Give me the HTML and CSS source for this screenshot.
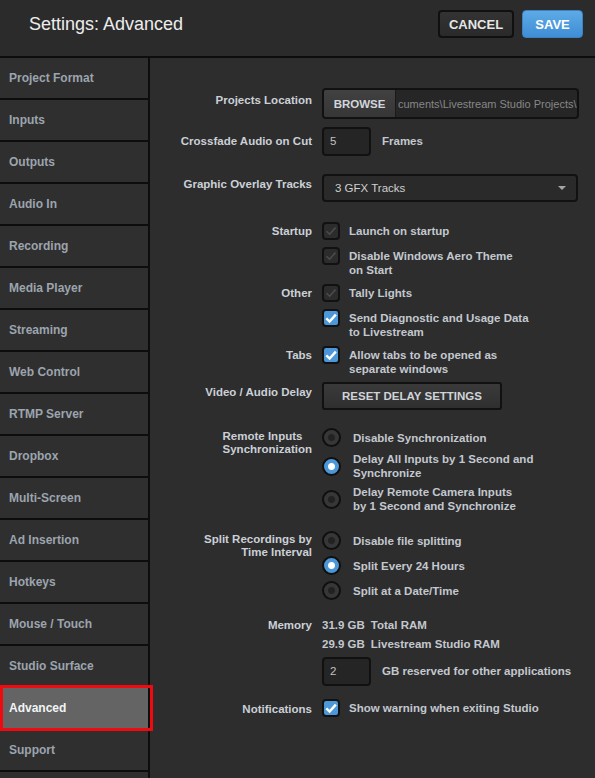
FILE: index.html
```html
<!DOCTYPE html>
<html>
<head>
<meta charset="utf-8">
<link rel="stylesheet" href="styles.css">
</head>
<body>
<div class="app">
  <header class="topbar">
    <h1 class="title">Settings: Advanced</h1>
    <div class="actions">
      <button class="btn btn-cancel">CANCEL</button>
      <button class="btn btn-save">SAVE</button>
    </div>
  </header>
  <div class="body">
    <nav class="sidebar">
      <div class="nav-item">Project Format</div>
      <div class="nav-item">Inputs</div>
      <div class="nav-item">Outputs</div>
      <div class="nav-item">Audio In</div>
      <div class="nav-item">Recording</div>
      <div class="nav-item">Media Player</div>
      <div class="nav-item">Streaming</div>
      <div class="nav-item">Web Control</div>
      <div class="nav-item">RTMP Server</div>
      <div class="nav-item">Dropbox</div>
      <div class="nav-item">Multi-Screen</div>
      <div class="nav-item">Ad Insertion</div>
      <div class="nav-item">Hotkeys</div>
      <div class="nav-item">Mouse / Touch</div>
      <div class="nav-item">Studio Surface</div>
      <div class="nav-item active">Advanced</div>
      <div class="nav-item">Support</div>
    </nav>
    <main class="content">
      <div class="row r-browse">
        <div class="label pad5">Projects Location</div>
        <div class="browse">
          <span class="browse-btn">BROWSE</span>
          <span class="path">cuments\Livestream Studio Projects\</span>
        </div>
      </div>

      <div class="row r-cross">
        <div class="label pad7">Crossfade Audio on Cut</div>
        <div class="inline">
          <div class="numbox">5</div>
          <span class="opt-text pad7">Frames</span>
        </div>
      </div>

      <div class="row r-select">
        <div class="label pad3">Graphic Overlay Tracks</div>
        <div class="select">
          <span>3 GFX Tracks</span>
          <span class="caret"></span>
        </div>
      </div>

      <div class="row r-startup">
        <div class="label pad2">Startup</div>
        <div class="opts">
          <div class="check-opt">
            <span class="cb"><svg viewBox="0 0 14 14" width="14" height="14"><path d="M2.5 7.2 L5.6 10.2 L11.5 3.6" fill="none" stroke="#4c4c4c" stroke-width="1.6"/></svg></span>
            <span class="opt-text">Launch on startup</span>
          </div>
          <div class="check-opt">
            <span class="cb"><svg viewBox="0 0 14 14" width="14" height="14"><path d="M2.5 7.2 L5.6 10.2 L11.5 3.6" fill="none" stroke="#4c4c4c" stroke-width="1.6"/></svg></span>
            <span class="opt-text">Disable Windows Aero Theme<br>on Start</span>
          </div>
        </div>
      </div>

      <div class="row r-gap7">
        <div class="label pad2">Other</div>
        <div class="opts">
          <div class="check-opt">
            <span class="cb"><svg viewBox="0 0 14 14" width="14" height="14"><path d="M2.5 7.2 L5.6 10.2 L11.5 3.6" fill="none" stroke="#4c4c4c" stroke-width="1.6"/></svg></span>
            <span class="opt-text">Tally Lights</span>
          </div>
          <div class="check-opt">
            <span class="cb on"><svg viewBox="0 0 14 14" width="14" height="14"><path d="M2.3 7.4 L5.6 10.6 L11.8 3.6" fill="none" stroke="#ffffff" stroke-width="2.4"/></svg></span>
            <span class="opt-text">Send Diagnostic and Usage Data<br>to Livestream</span>
          </div>
        </div>
      </div>

      <div class="row r-gap7">
        <div class="label pad2">Tabs</div>
        <div class="opts">
          <div class="check-opt">
            <span class="cb on"><svg viewBox="0 0 14 14" width="14" height="14"><path d="M2.3 7.4 L5.6 10.6 L11.8 3.6" fill="none" stroke="#ffffff" stroke-width="2.4"/></svg></span>
            <span class="opt-text">Allow tabs to be opened as<br>separate windows</span>
          </div>
        </div>
      </div>

      <div class="row r-gap6">
        <div class="label pad3">Video / Audio Delay</div>
        <div><button class="reset-btn">RESET DELAY SETTINGS</button></div>
      </div>

      <div class="row r-remote">
        <div class="label label-2 pad2"><span class="left-block">Remote Inputs<br>Synchronization</span></div>
        <div class="radios">
          <div class="radio-opt"><span class="rb"></span><span class="opt-text">Disable Synchronization</span></div>
          <div class="radio-opt"><span class="rb on"></span><span class="opt-text">Delay All Inputs by 1 Second and<br>Synchronize</span></div>
          <div class="radio-opt"><span class="rb"></span><span class="opt-text">Delay Remote Camera Inputs<br>by 1 Second and Synchronize</span></div>
        </div>
      </div>

      <div class="row r-split">
        <div class="label label-2 pad2">Split Recordings by<br>Time Interval</div>
        <div class="radios radios-6">
          <div class="radio-opt"><span class="rb"></span><span class="opt-text">Disable file splitting</span></div>
          <div class="radio-opt"><span class="rb on"></span><span class="opt-text">Split Every 24 Hours</span></div>
          <div class="radio-opt"><span class="rb"></span><span class="opt-text">Split at a Date/Time</span></div>
        </div>
      </div>

      <div class="row r-memory">
        <div class="label">Memory</div>
        <div class="memory">
          <div class="mem-line"><span class="mem-val">31.9 GB</span><span>Total RAM</span></div>
          <div class="mem-line"><span class="mem-val">29.9 GB</span><span>Livestream Studio RAM</span></div>
          <div class="inline mem-reserve">
            <div class="numbox">2</div>
            <span class="opt-text pad7">GB reserved for other applications</span>
          </div>
        </div>
      </div>

      <div class="row r-notif">
        <div class="label pad3">Notifications</div>
        <div class="opts">
          <div class="check-opt">
            <span class="cb on"><svg viewBox="0 0 14 14" width="14" height="14"><path d="M2.3 7.4 L5.6 10.6 L11.8 3.6" fill="none" stroke="#ffffff" stroke-width="2.4"/></svg></span>
            <span class="opt-text">Show warning when exiting Studio</span>
          </div>
        </div>
      </div>
    </main>
  </div>
</div>
</body>
</html>
```

FILE: styles.css
```css
* { box-sizing: border-box; }
html, body { margin: 0; padding: 0; }
body {
  background: #2d2d2d;
  font-family: "Liberation Sans", Arial, sans-serif;
}
.app {
  width: 595px;
  height: 778px;
  overflow: hidden;
  display: flex;
  flex-direction: column;
}
.topbar {
  height: 58px;
  flex: none;
  background: #2b2b2b;
  border-bottom: 2px solid #0d0d0d;
  display: flex;
  align-items: center;
  justify-content: space-between;
  padding: 0 12px 8px 29px;
}
.title {
  margin: 0;
  font-size: 18px;
  font-weight: normal;
  color: #ededed;
  line-height: 22px;
}
.actions { display: flex; gap: 8px; }
.btn {
  height: 28px;
  border-radius: 4px;
  font-family: "Liberation Sans", Arial, sans-serif;
  font-weight: bold;
  font-size: 13px;
  padding: 0;
  cursor: pointer;
}
.btn-cancel {
  width: 76px;
  background: linear-gradient(#333333, #2a2a2a);
  border: 2px solid #101010;
  color: #e6e6e6;
}
.btn-save {
  width: 61px;
  background: linear-gradient(#5eaae6, #3f8ed4);
  border: 1px solid #3a82c4;
  color: #ffffff;
}
.body { flex: 1; display: flex; min-height: 0; }
.sidebar {
  width: 150px;
  flex: none;
  border-right: 2px solid #0d0d0d;
  background: #2f2f2f;
}
.nav-item {
  height: 42px;
  border-bottom: 2px solid #0d0d0d;
  display: flex;
  align-items: center;
  padding-left: 9px;
  font-size: 12px;
  font-weight: bold;
  color: #9ca4ae;
}
.nav-item.active {
  position: relative;
  background: #646464;
  color: #f2f4f6;
}
.nav-item.active::after {
  content: "";
  position: absolute;
  top: -3px;
  bottom: -3px;
  left: 0;
  right: -5px;
  border: 3px solid #ee0a0f;
}
.content {
  flex: 1;
  padding-top: 30px;
  background: #2d2d2d;
}
.row {
  display: grid;
  grid-template-columns: 162px 1fr;
  column-gap: 10px;
  align-items: start;
}
.label {
  text-align: right;
  font-size: 11.5px;
  font-weight: bold;
  color: #cbd0d7;
  line-height: 14px;
}
.label-2 { line-height: 13px; }
.left-block { display: inline-block; text-align: left; }
.pad2 { padding-top: 2px; }
.pad3 { padding-top: 3px; }
.pad5 { padding-top: 5px; }
.pad7 { padding-top: 7px; }

.r-cross { margin-top: 8px; }
.r-select { margin-top: 18px; }
.r-startup { margin-top: 20px; }
.r-gap7 { margin-top: 7px; }
.r-gap6 { margin-top: 6px; }
.r-remote { margin-top: 18px; }
.r-split { margin-top: 18px; }
.r-memory { margin-top: 18px; }
.r-notif { margin-top: 13px; }

.browse {
  width: 257px;
  height: 31px;
  border: 2px solid #111111;
  border-radius: 4px;
  background: #262626;
  display: flex;
  align-items: stretch;
  overflow: hidden;
}
.browse-btn {
  width: 72px;
  flex: none;
  background: linear-gradient(#414141, #363636);
  border-right: 1px solid #1a1a1a;
  display: flex;
  align-items: center;
  justify-content: center;
  font-size: 11.5px;
  font-weight: bold;
  color: #d2d6db;
}
.path {
  display: flex;
  align-items: center;
  padding-left: 2px;
  font-size: 11px;
  color: #868686;
  white-space: nowrap;
}
.inline { display: flex; align-items: flex-start; gap: 11px; }
.numbox {
  width: 49px;
  height: 29px;
  border: 2px solid #111111;
  border-radius: 4px;
  background: #252525;
  font-size: 11.5px;
  color: #c2c2c2;
  padding: 6px 0 0 6px;
}
.opt-text {
  font-size: 11.5px;
  font-weight: bold;
  color: #c3c8cf;
  line-height: 14px;
}
.select {
  width: 256px;
  height: 28px;
  border: 2px solid #111111;
  border-radius: 4px;
  background: #2a2a2a;
  display: flex;
  align-items: center;
  justify-content: space-between;
  padding: 0 10px 0 11px;
  font-size: 11.5px;
  color: #cfcfcf;
}
.caret {
  width: 0;
  height: 0;
  border-left: 4px solid transparent;
  border-right: 4px solid transparent;
  border-top: 4px solid #a5a5a5;
}
.opts { display: flex; flex-direction: column; gap: 7px; }
.check-opt { display: flex; align-items: flex-start; gap: 9px; }
.check-opt .opt-text { padding-top: 2px; }
.cb {
  width: 18px;
  height: 18px;
  flex: none;
  border: 2px solid #111111;
  border-radius: 4px;
  background: #2c2c2c;
  display: flex;
  align-items: center;
  justify-content: center;
}
.cb.on { background: #4c97d8; }
.reset-btn {
  width: 180px;
  height: 28px;
  border: 2px solid #111111;
  border-radius: 3px;
  background: linear-gradient(#3a3a3a, #2f2f2f);
  font-family: "Liberation Sans", Arial, sans-serif;
  font-size: 11.5px;
  font-weight: bold;
  color: #d0d4d9;
  padding: 0;
}
.radios { display: flex; flex-direction: column; gap: 5px; }
.radios-6 { gap: 6px; }
.radio-opt {
  display: flex;
  align-items: center;
  gap: 12px;
  min-height: 19px;
}
.rb {
  width: 19px;
  height: 19px;
  flex: none;
  border-radius: 50%;
  border: 2px solid #0f0f0f;
  background: radial-gradient(circle, #222 0, #222 3px, #363636 4px, #3a3a3a 100%);
}
.rb.on {
  background: radial-gradient(circle, #ffffff 0, #ffffff 3px, #4c97d8 4px, #4c97d8 100%);
}
.memory { display: flex; flex-direction: column; }
.mem-line {
  display: flex;
  gap: 6px;
  font-size: 11.5px;
  font-weight: bold;
  color: #c3c8cf;
  line-height: 14px;
  margin-bottom: 5px;
}
.mem-line + .mem-line { margin-bottom: 0; }
.mem-reserve { margin-top: 6px; }
```
